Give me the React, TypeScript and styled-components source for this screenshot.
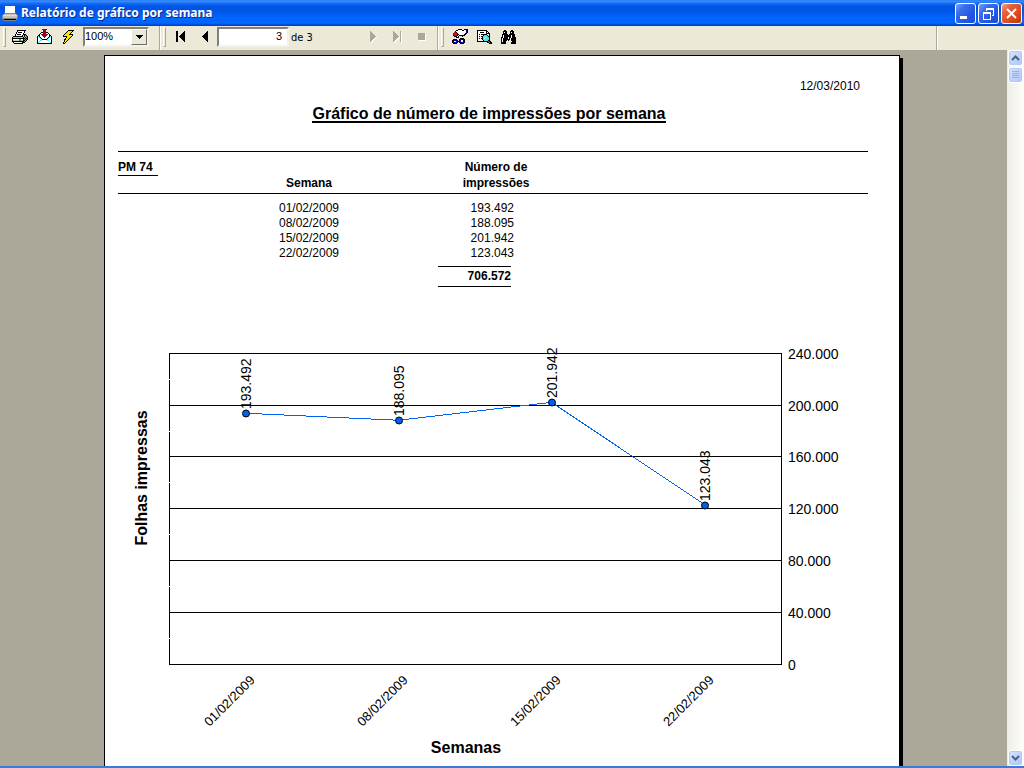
import React, { useState } from 'react';
import styled, { createGlobalStyle } from 'styled-components';

const arial = "'Liberation Sans', Arial, sans-serif";
const face = '#ece9d8';
const shade = '#aca899';

const GlobalStyle = createGlobalStyle`
  *, *::before, *::after { box-sizing: border-box; }
  body { margin: 0; background: ${shade}; font-family: ${arial}; color: #000; }
  button, input, select { font: inherit; color: inherit; margin: 0; padding: 0; }
`;

const Window = styled.div`
  display: flex;
  flex-direction: column;
  height: 100vh;
  overflow: hidden;
  border-bottom: 2px solid #3a7ad8;
`;

/* Title bar */

const TitleBar = styled.header`
  display: flex;
  align-items: center;
  flex: none;
  height: 26px;
  padding: 0 2px;
  background: linear-gradient(
    #1f6fe8 0, #3a93ff 1px, #1a70f8 3px, #0055e5 6px, #0054e3 10px,
    #005cf2 14px, #0066ff 18px, #0066ff 23px, #0048cf 25px, #003cb8 26px
  );
`;

const TitleText = styled.h1`
  flex: 1;
  margin: 0 0 0 3px;
  font: bold 12px/20px 'Noto Sans', 'Open Sans', sans-serif;
  color: #fff;
  text-shadow: 1px 1px 0 #0a2a8a;
  white-space: nowrap;
`;

const CaptionButtons = styled.div`
  display: flex;
  gap: 2px;
`;

const CaptionButton = styled.button<{ $danger?: boolean }>`
  display: grid;
  place-items: center;
  width: 21px;
  height: 21px;
  border: 1px solid #fff;
  border-radius: 3px;
  background: ${(p) =>
    p.$danger
      ? 'linear-gradient(135deg, #f0a088 0, #e4603c 30%, #dc4a1c 65%, #b83808 100%)'
      : 'linear-gradient(135deg, #7aa2f4 0, #3a6cec 30%, #2458e4 65%, #1a4cd0 100%)'};
`;

/* Toolbar */

const Toolbar = styled.div`
  display: flex;
  align-items: flex-start;
  flex: none;
  height: 24px;
  background: ${face};
  font-size: 11px;
`;

const Group = styled.div<{ $end?: boolean }>`
  display: flex;
  align-items: center;
  height: 24px;
  padding: 0 ${(p) => (p.$end ? 0 : 4)}px 2px 3px;
  border-right: 1px solid ${shade};
  box-shadow: 1px 0 0 #fff;
  flex: ${(p) => (p.$end ? 1 : 'none')};
`;

const Tail = styled.div`
  width: 87px;
`;

const Grip = styled.span<{ $wide?: boolean }>`
  width: 3px;
  height: 20px;
  margin-right: ${(p) => (p.$wide ? 4 : 2)}px;
  border: 1px solid;
  border-color: #fff ${shade} ${shade} #fff;
`;

const ToolButton = styled.button`
  display: grid;
  place-items: center;
  width: 24px;
  height: 20px;
  padding-bottom: 1px;
  border: 0;
  background: none;
`;

const ZoomBox = styled.div`
  position: relative;
  width: 66px;
  height: 20px;
  margin: 0 6px 0 3px;
`;

const ZoomSelect = styled.select`
  appearance: none;
  width: 100%;
  height: 100%;
  padding: 0 20px 2px 0;
  border: 2px solid;
  border-color: #808080 #f4f2e8 #f4f2e8 #808080;
  border-radius: 0;
  background: #fff;
`;

const ZoomArrow = styled.span`
  position: absolute;
  top: 2px;
  right: 2px;
  display: grid;
  place-items: center;
  width: 16px;
  height: 16px;
  border: 1px solid;
  border-color: #fff #716f64 #716f64 #fff;
  background: ${face};
  pointer-events: none;
`;

const PageInput = styled.input`
  width: 72px;
  height: 20px;
  margin-left: 1px;
  padding: 0 5px 2px 0;
  border: 2px solid;
  border-color: #808080 #f4f2e8 #f4f2e8 #808080;
  background: #fff;
  text-align: right;
`;

const PageCount = styled.label`
  width: 72px;
  padding-left: 2px;
  font-family: 'DejaVu Sans Condensed', 'DejaVu Sans', sans-serif;
`;

/* Document area */

const Body = styled.div`
  display: flex;
  flex: 1;
  min-height: 0;
`;

const Workspace = styled.main`
  flex: 1;
  min-width: 0;
  overflow: hidden;
  background: ${shade};
`;

const Sheet = styled.article`
  margin: 5px 107px 20px 104px;
  padding: 22px 31px 40px 13px;
  border: 1px solid #000;
  background: #fff;
  box-shadow: 3px 3px 0 #000;
  font-size: 12px;
`;

const PrintDate = styled.div`
  padding-right: 8px;
  line-height: 16px;
  text-align: right;
`;

const Heading = styled.div`
  display: flex;
  justify-content: center;
  padding: 13px 8px 28px 0;
  border-bottom: 1px solid #000;
`;

const ReportTitle = styled.h2`
  margin: 0;
  border-bottom: 2px solid #000;
  font-size: 16px;
  line-height: 14px;
`;

const DataTable = styled.table`
  width: 100%;
  border-collapse: collapse;
  table-layout: fixed;
`;

const HeadCell = styled.th<{ $left?: boolean }>`
  padding: 7px 0 2px;
  border-bottom: 1px solid #000;
  line-height: 16px;
  text-align: ${(p) => (p.$left ? 'left' : 'center')};
  vertical-align: ${(p) => (p.$left ? 'top' : 'bottom')};
`;

const GroupName = styled.span`
  display: block;
  width: 40px;
  border-bottom: 1px solid #000;
`;

const Rows = styled.tbody`
  &::before { content: ''; display: table-row; height: 7px; }
`;

const Cell = styled.td<{ $number?: boolean }>`
  padding: 0 ${(p) => (p.$number ? 40 : 0)}px 0 0;
  line-height: 15px;
  text-align: ${(p) => (p.$number ? 'right' : 'center')};
`;

const TotalCell = styled.td`
  padding: 5px 0 0;
`;

const Total = styled.strong`
  display: block;
  width: 73px;
  border: solid #000;
  border-width: 1px 0;
  line-height: 19px;
  text-align: right;
`;

const ChartSvg = styled.svg`
  display: block;
  width: 100%;
  margin-top: 53px;
  font-family: ${arial};
`;

/* Scroll bar */

const ScrollBar = styled.div`
  display: flex;
  flex-direction: column;
  flex: none;
  width: 17px;
  padding-left: 1px;
  background: linear-gradient(90deg, #eeede5, #fefefb);
`;

const ScrollButton = styled.button`
  display: grid;
  place-items: center;
  width: 15px;
  height: 16px;
  border: 1px solid #fff;
  border-radius: 3px;
  background: linear-gradient(135deg, #dbe6fe, #c1d3fb 50%, #aec8f7);
  box-shadow: inset 0 0 0 1px #b4c8f6;
`;

const ScrollTrack = styled.div`
  flex: 1;
  padding-top: 1px;
`;

/* Icons built from character maps, one character per pixel */

const palette: Record<string, string> = {
  K: '#000000', W: '#ffffff', G: '#c6c3b8', g: '#848484', N: '#00c000',
  R: '#a00010', r: '#e01020', C: '#40e8f0', Y: '#f8e800', B: '#0000a8', b: '#d8d8e8',
};

function PixelIcon({ map }: { map: string[] }) {
  const width = Math.max(...map.map((row) => row.length));
  return (
    <svg width={width} height={map.length} shapeRendering="crispEdges" aria-hidden="true">
      {map.flatMap((row, y) =>
        [...row].map((c, x) =>
          palette[c] ? <rect key={`${x}-${y}`} x={x} y={y} width="1" height="1" fill={palette[c]} /> : null,
        ),
      )}
    </svg>
  );
}

const printer = [
  '.....KKKKKKKKK..',
  '.....KWWWWWWK...',
  '....KWKKKKWWK...',
  '....KWWWWWWK....',
  '...KWKKKKWWKKK..',
  '...KWWWWWWKGKgK.',
  '.KKKKKKKKKKGKGgK',
  'KGGGGGGGGGGKGKgK',
  'KKKKKKKKKKKKKgKK',
  'KWWWWWWNNWWKgKgK',
  'KGGGGGGNNGGKKgK.',
  'KKKKKKKKKKKKgK..',
  '.KWWWWWWWWKKK...',
  '..KKKKKKKKK.....',
];

const envelope = [
  '.....RRRRR.....',
  '......RRR......',
  '......RRR......',
  '....KKRRRKK....',
  '...KWWRRRWWK...',
  '..KWRRRRRRRWK..',
  '.KKWWRRRRRWWKK.',
  'KCKWWWRRRWWWKCK',
  'KWCKWWWRWWWKCWK',
  'KWWCKWWWWWKCWWK',
  'KWWWCKKKKKCWWWK',
  'KWWCCWWWWWCCWWK',
  'KWCWWWWWWWWWCWK',
  'KCWWWWWWWWWWWCK',
  'KKKKKKKKKKKKKKK',
];

const bolt = [
  '......KKKKKK.',
  '.....KYYYYK..',
  '....KYYYYK...',
  '...KYYYYK....',
  '..KYYYYKKKK..',
  '.KYYYYYYYYK..',
  '.KKKKYYYYK...',
  '....KYYYK....',
  '...KYYYK.....',
  '..KKYYK......',
  '..KYYK.......',
  '..KYK........',
  '.KYK.........',
  '.KK..........',
];

const exportIcon = [
  '......KKKK..KKKK',
  '....KKWWWWKKWWBK',
  '...KWWWWWWWWWWBK',
  '..rRKWWWWWWWWWBK',
  '.RrrrKWWWWWWWKK.',
  '.RrrrKKWWWWWKK..',
  '.KRrRK.KKKKKK...',
  '..KKKWK...K.....',
  '....KKK.........',
  '........KKKK....',
  '.KKKK..KBBBBK...',
  'KBBBBK.KBWWBK...',
  'KBWWBKKKBWWBK...',
  'KBBBBK.KBBBBK...',
  '.KKKK...KKKK....',
];

const preview = [
  'KKKKKKKKKK.....',
  'KWWWWWWWWKK....',
  'KWWKKKKWWKWK...',
  'KWWWWWWWWKKKK..',
  'KWKWKKKKKKWWK..',
  'KWWWWWKCCCKWK..',
  'KWKWKKCCCCCKK..',
  'KWWWWKCCWCCCK..',
  'KWKWKKCWCCCCK..',
  'KWWWWKCCCCCCK..',
  'KWWWWWKCCCCKK..',
  'KKKKKKKKKKKgKK.',
  '..........KKgKK',
  '............KKK',
];

const binoculars = [
  '...KK.....KK...',
  '..KKKK...KKKK..',
  '..KWKK...KWKK..',
  '..KKKK...KKKK..',
  '.KKKKKK.KKKKKK.',
  '.KWKKKKKKKWKKK.',
  '.KWKKKKKKKWKKK.',
  'KKWKKKKWKKWKKKK',
  'KWKKKKKWKWKKKKK',
  'KWKKKKKKKWKKKKK',
  'KWKKKK.K.WKKKKK',
  'KWKKK.....WKKKK',
  'KKKKK.....KKKKK',
  'KKKKK.....KKKKK',
];

const titlePrinter = [
  '...WWWWWWWWWW...',
  '...WWWWWWWWWW...',
  '...WWWWWWWWWW...',
  '...WWWWWWWWWW...',
  '...WWWWWWWWWW...',
  '...WWWWWWWWWW...',
  '...WWWWWWWWWW...',
  '..gggggggggggg..',
  '.gGGGGGGGGGGGGg.',
  'gbbbbbbbbbbbbbbg',
  'gGGGGGGGGGGGGGGg',
  'gGGGGGGGGGGGGGGg',
  'gggggggggggggggg',
  '.gKKKKKKKKKKKKg.',
  '..gggggggggggg..',
];

function NavIcon({ d, off }: { d: string; off?: boolean }) {
  return (
    <svg width="12" height="13" shapeRendering="crispEdges" aria-hidden="true">
      {off && <path d={d} fill="#fff" transform="translate(1 1)" />}
      <path d={d} fill={off ? shade : '#000'} />
    </svg>
  );
}

/* Chart */

const weeks = [
  { date: '01/02/2009', value: 193492, label: '193.492' },
  { date: '08/02/2009', value: 188095, label: '188.095' },
  { date: '15/02/2009', value: 201942, label: '201.942' },
  { date: '22/02/2009', value: 123043, label: '123.043' },
];

const ticks = ['0', '40.000', '80.000', '120.000', '160.000', '200.000', '240.000'];
const plot = { left: 51, right: 663, top: 13, bottom: 324 };

const valueY = (v: number) => plot.bottom - ((plot.bottom - plot.top) * v) / 240000;
const lineY = (v: number) => Math.round(valueY(v) - 0.2);
const weekX = (i: number) => plot.left + ((plot.right - plot.left) * (i + 0.5)) / weeks.length;

function Chart() {
  return (
    <ChartSvg viewBox="0 0 750 430" role="img" aria-label="Folhas impressas por semana">
      <g shapeRendering="crispEdges">
        {ticks.map((t, i) => (
          <rect key={t} x={plot.left} y={lineY(i * 40000)} width={plot.right - plot.left + 1} height="1" />
        ))}
        <rect x={plot.left} y={plot.top} width="1" height={plot.bottom - plot.top} />
        <rect x={plot.right} y={plot.top} width="1" height={plot.bottom - plot.top} />
        {ticks.slice(1).map((t, i) => (
          <rect key={t} x={plot.left} y={lineY(i * 40000 + 20000)} width="1" height="1" fill="#fff" />
        ))}
      </g>
      <polyline
        points={weeks.map((w, i) => `${weekX(i)},${valueY(w.value)}`).join(' ')}
        fill="none"
        stroke="#0060f0"
        shapeRendering="crispEdges"
      />
      {ticks.map((t, i) => (
        <text key={t} x="670" y={lineY(i * 40000) + 6} fontSize="14">{t}</text>
      ))}
      {weeks.map((w, i) => {
        const x = weekX(i);
        const y = Math.round(valueY(w.value));
        return (
          <g key={w.date}>
            <text fontSize="14" transform={`translate(${x + 5} ${y - 4}) rotate(-90)`}>{w.label}</text>
            <circle cx={x + 0.5} cy={y + 0.5} r="3.5" fill="#0060f0" stroke="#000" />
            <text fontSize="13" textAnchor="end" transform={`translate(${x + 10} 341) rotate(-45)`}>{w.date}</text>
          </g>
        );
      })}
      <text fontSize="16" fontWeight="bold" textAnchor="middle" transform="translate(29 138) rotate(-90)">
        Folhas impressas
      </text>
      <text x="348" y="413" fontSize="16" fontWeight="bold" textAnchor="middle">Semanas</text>
    </ChartSvg>
  );
}

export default function App() {
  const [page, setPage] = useState('3');
  return (
    <>
      <GlobalStyle />
      <Window>
        <TitleBar>
          <PixelIcon map={titlePrinter} />
          <TitleText>Relatório de gráfico por semana</TitleText>
          <CaptionButtons>
            <CaptionButton aria-label="Minimizar">
              <svg width="15" height="15"><rect x="2" y="10" width="7" height="3" fill="#fff" /></svg>
            </CaptionButton>
            <CaptionButton aria-label="Restaurar">
              <svg width="15" height="15" shapeRendering="crispEdges" fill="#fff">
                <path d="M5 2h8v8h-2V9h1V4H6v1H5z M2 6h8v8H2z M3 8v5h6V8z" fillRule="evenodd" />
              </svg>
            </CaptionButton>
            <CaptionButton $danger aria-label="Fechar">
              <svg width="15" height="15"><path d="M3 3l9 9M12 3l-9 9" stroke="#fff" strokeWidth="2" /></svg>
            </CaptionButton>
          </CaptionButtons>
        </TitleBar>

        <Toolbar>
          <Group>
            <Grip />
            <ToolButton aria-label="Imprimir"><PixelIcon map={printer} /></ToolButton>
            <ToolButton aria-label="Exportar"><PixelIcon map={envelope} /></ToolButton>
            <ToolButton aria-label="Atualizar"><PixelIcon map={bolt} /></ToolButton>
            <ZoomBox>
              <ZoomSelect aria-label="Zoom" defaultValue="100%">
                <option>100%</option>
              </ZoomSelect>
              <ZoomArrow>
                <svg width="7" height="4" shapeRendering="crispEdges"><path d="M0 0h7v1H6v1H5v1H4v1H3V3H2V2H1V1H0z" /></svg>
              </ZoomArrow>
            </ZoomBox>
          </Group>
          <Group>
            <Grip />
            <ToolButton aria-label="Primeira página"><NavIcon d="M2 1h2v11H2z M11 1v11L5 6.500z" /></ToolButton>
            <ToolButton aria-label="Página anterior"><NavIcon d="M10 1v11L4 6.500z" /></ToolButton>
            <PageInput id="page" value={page} onChange={(e) => setPage(e.target.value)} />
            <PageCount htmlFor="page">de 3</PageCount>
            <ToolButton disabled aria-label="Próxima página"><NavIcon off d="M3 1v11l6-5.500z" /></ToolButton>
            <ToolButton disabled aria-label="Última página"><NavIcon off d="M2 1v11l6-5.500z M9 1h1v11H9z" /></ToolButton>
            <ToolButton disabled aria-label="Parar"><NavIcon off d="M3 3h7v7H3z" /></ToolButton>
          </Group>
          <Group $end>
            <Grip $wide />
            <ToolButton aria-label="Opções"><PixelIcon map={exportIcon} /></ToolButton>
            <ToolButton aria-label="Visualizar"><PixelIcon map={preview} /></ToolButton>
            <ToolButton aria-label="Localizar"><PixelIcon map={binoculars} /></ToolButton>
          </Group>
          <Tail />
        </Toolbar>

        <Body>
          <Workspace>
            <Sheet>
              <PrintDate>12/03/2010</PrintDate>
              <Heading>
                <ReportTitle>Gráfico de número de impressões por semana</ReportTitle>
              </Heading>
              <DataTable>
                <colgroup>
                  <col style={{ width: 120 }} />
                  <col style={{ width: 142 }} />
                  <col style={{ width: 58 }} />
                  <col style={{ width: 116 }} />
                  <col />
                </colgroup>
                <thead>
                  <tr>
                    <HeadCell $left><GroupName>PM 74</GroupName></HeadCell>
                    <HeadCell>Semana</HeadCell>
                    <HeadCell />
                    <HeadCell>Número de<br />impressões</HeadCell>
                    <HeadCell />
                  </tr>
                </thead>
                <Rows>
                  {weeks.map((w) => (
                    <tr key={w.date}>
                      <Cell />
                      <Cell>{w.date}</Cell>
                      <Cell />
                      <Cell $number>{w.label}</Cell>
                      <Cell />
                    </tr>
                  ))}
                </Rows>
                <tfoot>
                  <tr>
                    <TotalCell colSpan={3} />
                    <TotalCell><Total>706.572</Total></TotalCell>
                    <TotalCell />
                  </tr>
                </tfoot>
              </DataTable>
              <Chart />
            </Sheet>
          </Workspace>
          <ScrollBar>
            <ScrollButton aria-label="Rolar para cima">
              <svg width="9" height="6"><path d="M1 5l3.500-3.500L8 5" fill="none" stroke="#4d6185" strokeWidth="2" /></svg>
            </ScrollButton>
            <ScrollTrack>
              <ScrollButton aria-label="Posição">
                <svg width="7" height="8" shapeRendering="crispEdges" fill="#8cb0f8">
                  <path d="M0 0h7v1H0z M0 2h7v1H0z M0 4h7v1H0z M0 6h7v1H0z" />
                </svg>
              </ScrollButton>
            </ScrollTrack>
            <ScrollButton aria-label="Rolar para baixo">
              <svg width="9" height="6"><path d="M1 1l3.500 3.500L8 1" fill="none" stroke="#4d6185" strokeWidth="2" /></svg>
            </ScrollButton>
          </ScrollBar>
        </Body>
      </Window>
    </>
  );
}
